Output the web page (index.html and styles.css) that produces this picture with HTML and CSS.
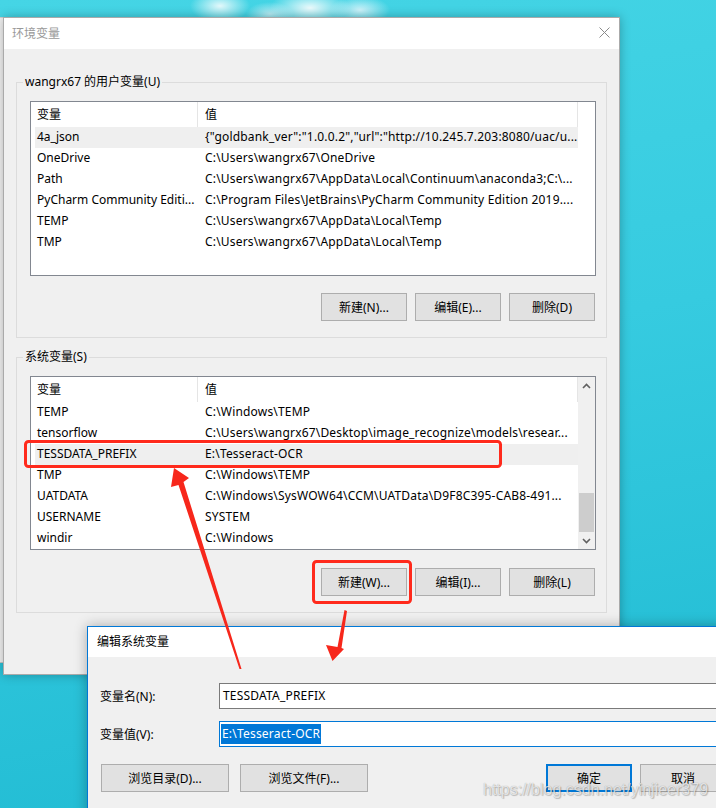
FILE: index.html
```html
<!DOCTYPE html>
<html lang="zh-CN">
<head>
<meta charset="utf-8">
<title>环境变量</title>
<link rel="stylesheet" href="styles.css">
</head>
<body>
<div class="desktop">
  <div class="clouds"></div>
  <div class="backwin"></div>

  <section class="win main">
    <header class="titlebar">
      <span class="title">环境变量</span>
      <svg class="close" width="11" height="11" viewBox="0 0 11 11"><path d="M0.5 0.5 L10.5 10.5 M10.5 0.5 L0.5 10.5" stroke="#8a8a8a" stroke-width="1" fill="none"/></svg>
    </header>
    <div class="main-body">
      <div class="group g1">
        <span class="legend">wangrx67 的用户变量(U)</span>
        <div class="list l1">
          <div class="row head"><span class="c1">变量</span><span class="c2">值</span></div>
          <div class="row sel"><span class="c1">4a_json</span><span class="c2">{"goldbank_ver":"1.0.0.2","url":"http://10.245.7.203:8080/uac/u...</span></div>
          <div class="row"><span class="c1">OneDrive</span><span class="c2">C:\Users\wangrx67\OneDrive</span></div>
          <div class="row"><span class="c1">Path</span><span class="c2">C:\Users\wangrx67\AppData\Local\Continuum\anaconda3;C:\...</span></div>
          <div class="row"><span class="c1">PyCharm Community Editi...</span><span class="c2">C:\Program Files\JetBrains\PyCharm Community Edition 2019....</span></div>
          <div class="row"><span class="c1">TEMP</span><span class="c2">C:\Users\wangrx67\AppData\Local\Temp</span></div>
          <div class="row"><span class="c1">TMP</span><span class="c2">C:\Users\wangrx67\AppData\Local\Temp</span></div>
        </div>
        <div class="btns">
          <button class="btn">新建(N)...</button>
          <button class="btn">编辑(E)...</button>
          <button class="btn">删除(D)</button>
        </div>
      </div>

      <div class="group g2">
        <span class="legend">系统变量(S)</span>
        <div class="list l2">
          <div class="row head"><span class="c1">变量</span><span class="c2">值</span></div>
          <div class="row"><span class="c1">TEMP</span><span class="c2">C:\Windows\TEMP</span></div>
          <div class="row"><span class="c1">tensorflow</span><span class="c2">C:\Users\wangrx67\Desktop\image_recognize\models\resear...</span></div>
          <div class="row sel"><span class="c1">TESSDATA_PREFIX</span><span class="c2">E:\Tesseract-OCR</span></div>
          <div class="row"><span class="c1">TMP</span><span class="c2">C:\Windows\TEMP</span></div>
          <div class="row"><span class="c1">UATDATA</span><span class="c2">C:\Windows\SysWOW64\CCM\UATData\D9F8C395-CAB8-491...</span></div>
          <div class="row"><span class="c1">USERNAME</span><span class="c2">SYSTEM</span></div>
          <div class="row"><span class="c1">windir</span><span class="c2">C:\Windows</span></div>
          <div class="scrollbar">
            <div class="sb-btn"><svg width="9" height="6" viewBox="0 0 9 6"><path d="M1 5 L4.5 1.5 L8 5" stroke="#606060" stroke-width="1.6" fill="none"/></svg></div>
            <div class="sb-track"><div class="sb-thumb"></div></div>
            <div class="sb-btn"><svg width="9" height="6" viewBox="0 0 9 6"><path d="M1 1 L4.5 4.5 L8 1" stroke="#606060" stroke-width="1.6" fill="none"/></svg></div>
          </div>
        </div>
        <div class="btns b2">
          <button class="btn">新建(W)...</button>
          <button class="btn">编辑(I)...</button>
          <button class="btn">删除(L)</button>
        </div>
      </div>
    </div>
  </section>

  <section class="win edit">
    <header class="titlebar edit-title"><span class="title-active">编辑系统变量</span></header>
    <div class="edit-body">
      <div class="field f1">
        <label class="flabel">变量名(N):</label>
        <div class="input">TESSDATA_PREFIX</div>
      </div>
      <div class="field f2">
        <label class="flabel">变量值(V):</label>
        <div class="input focus"><span class="selected">E:\Tesseract-OCR</span></div>
      </div>
      <div class="ebtns">
        <button class="btn wide">浏览目录(D)...</button>
        <button class="btn wide">浏览文件(F)...</button>
        <button class="btn ok">确定</button>
        <button class="btn cancel">取消</button>
      </div>
    </div>
  </section>

  <svg class="marks" width="716" height="808" viewBox="0 0 716 808">
    <rect x="25.5" y="441.5" width="475" height="25" rx="3" ry="3" fill="none" stroke="#ff2a1c" stroke-width="3"/>
    <rect x="313.5" y="561.5" width="97" height="41" rx="3" ry="3" fill="none" stroke="#ff2a1c" stroke-width="3"/>
    <polygon points="174,468 189,478 183.5,482 241.5,669 239.5,669 178.5,485 171,487" fill="#f7271b"/>
    <polygon points="344.5,610 347,611 341.5,648 344,649 332.5,661 326,645 337.5,647" fill="#f7271b"/>
  </svg>

  <div class="watermark">https://blog.csdn.net/yinjieer379</div>
</div>
</body>
</html>
```

FILE: styles.css
```css
* { box-sizing: border-box; }

html, body {
  margin: 0;
  padding: 0;
}

body {
  width: 716px;
  height: 808px;
  overflow: hidden;
  font-family: "Noto Sans", "Noto Sans CJK SC", sans-serif;
  font-size: 12px;
  color: #000;
}

.desktop {
  position: relative;
  width: 716px;
  height: 808px;
  overflow: hidden;
  background: linear-gradient(170deg, #45d5e5 0%, #36cbe0 45%, #1fbad2 100%);
}

.clouds {
  position: absolute;
  left: 160px;
  top: -20px;
  width: 240px;
  height: 44px;
  background:
    radial-gradient(ellipse 30px 16px at 60px 26px, rgba(255,255,255,0.85), rgba(255,255,255,0) 100%),
    radial-gradient(ellipse 40px 18px at 150px 28px, rgba(255,255,255,0.9), rgba(255,255,255,0) 100%),
    radial-gradient(ellipse 30px 14px at 200px 30px, rgba(240,250,255,0.8), rgba(255,255,255,0) 100%),
    radial-gradient(ellipse 24px 12px at 110px 34px, rgba(235,248,252,0.7), rgba(255,255,255,0) 100%);
}

.backwin {
  position: absolute;
  left: 0;
  top: 17px;
  width: 10px;
  height: 646px;
  background: #f3f3f3;
  border-bottom: 1px solid #c8c8c8;
  box-shadow: inset 0 50px 0 -49px #d0d0d0, inset 0 73px 0 -72px #d0d0d0, inset 0 148px 0 -147px #d0d0d0, inset 0 419px 0 -418px #d0d0d0, inset 0 546px 0 -545px #d0d0d0;
}

.win {
  position: absolute;
  background: #f0f0f0;
}

.main {
  left: 3px;
  top: 17px;
  width: 617px;
  height: 658px;
  border: 1px solid #aaaaaa;
  box-shadow: 0 0 10px rgba(0, 0, 0, 0.28);
}

.titlebar {
  height: 31px;
  background: #fff;
  display: flex;
  align-items: center;
  justify-content: space-between;
  padding: 0 9px 2px 8px;
}

.title {
  color: #999;
  font-size: 12px;
}

.close {
  display: block;
}

.main-body {
  padding: 33px 0 0 12px;
}

.group {
  position: relative;
  width: 591px;
  border: 1px solid #dcdcdc;
  padding: 18px 10px 0 13px;
}

.g1 { height: 256px; }
.g2 { height: 256px; margin-top: 19px; }

.legend {
  position: absolute;
  left: 6px;
  top: -9px;
  padding: 0 2px;
  line-height: 16px;
  background: #f0f0f0;
}

.list {
  position: relative;
  width: 566px;
  background: #fff;
  border: 1px solid #828790;
  padding: 0 17px 0 4px;
  overflow: hidden;
}

.l1 { height: 175px; }
.l2 { height: 174px; }

.row {
  display: flex;
  align-items: center;
  height: 21px;
  padding-bottom: 2px;
  white-space: nowrap;
}

.row.head {
  height: 25px;
  border-right: 1px solid #e5e5e5;
}

.row.sel {
  background: #efefef;
}

.c1 {
  flex: 0 0 163px;
  width: 163px;
  padding-left: 2px;
  overflow: hidden;
  align-self: stretch;
  display: flex;
  align-items: center;
}

.head .c1 {
  border-right: 1px solid #e5e5e5;
  margin-bottom: -2px;
  padding-bottom: 2px;
}

.c2 {
  flex: 1 1 auto;
  padding-left: 7px;
  overflow: hidden;
  letter-spacing: 0.18px;
}

.scrollbar {
  position: absolute;
  right: 0;
  top: 0;
  bottom: 0;
  width: 17px;
  background: #f0f0f0;
  display: flex;
  flex-direction: column;
}

.sb-btn {
  height: 17px;
  flex: 0 0 17px;
  display: flex;
  align-items: center;
  justify-content: center;
}

.sb-track {
  flex: 1 1 auto;
  display: flex;
  flex-direction: column;
  justify-content: flex-end;
  padding: 0 1px;
}

.sb-thumb {
  height: 39px;
  background: #cdcdcd;
}

.btns {
  display: flex;
  justify-content: flex-end;
  gap: 8px;
  margin-top: 17px;
  padding-right: 1px;
}

.btns.b2 { margin-top: 18px; }

.btn {
  height: 28px;
  width: 86px;
  background: #e1e1e1;
  border: 1px solid #adadad;
  font-family: inherit;
  font-size: 12px;
  color: #000;
  padding: 0 0 1px;
  margin: 0;
}

/* Edit dialog */
.edit {
  left: 87px;
  top: 626px;
  width: 680px;
  height: 200px;
  border: 1px solid #0078d7;
  box-shadow: 0 0 12px rgba(0, 0, 0, 0.3);
}

.edit-title {
  height: 30px;
  padding-left: 9px;
}

.title-active {
  color: #000;
}

.edit-body {
  padding-left: 12px;
}

.field {
  display: flex;
  align-items: center;
}

.f1 { margin-top: 26px; }
.f2 { margin-top: 12px; }

.flabel {
  width: 119px;
  flex: 0 0 119px;
  padding-bottom: 1px;
}

.input {
  width: 520px;
  height: 26px;
  background: #fff;
  border: 1px solid #7a7a7a;
  padding: 0 0 1px 3px;
  display: flex;
  align-items: center;
  white-space: nowrap;
  letter-spacing: 0.2px;
}

.input.focus {
  border-color: #0078d7;
  padding: 0 0 0 1px;
}

.selected {
  background: #0078d7;
  color: #fff;
  line-height: 20px;
  padding: 0 1px;
}

.ebtns {
  display: flex;
  margin-top: 17px;
  padding-left: 1px;
}

.btn.wide {
  width: 128px;
}

.btn.wide + .btn.wide {
  margin-left: 11px;
}

.btn.ok {
  margin-left: 178px;
  border: 2px solid #0078d7;
}

.btn.cancel {
  margin-left: 8px;
}

.marks {
  position: absolute;
  left: 0;
  top: 0;
  pointer-events: none;
}

.watermark {
  position: absolute;
  left: 483px;
  top: 780px;
  font-family: "Liberation Sans", Arial, sans-serif;
  font-size: 16px;
  line-height: 20px;
  color: rgba(255, 255, 255, 0.72);
  text-shadow: 0 0 1px rgba(0, 0, 0, 0.35), 1px 1px 1px rgba(0, 0, 0, 0.2);
  white-space: nowrap;
}
```
